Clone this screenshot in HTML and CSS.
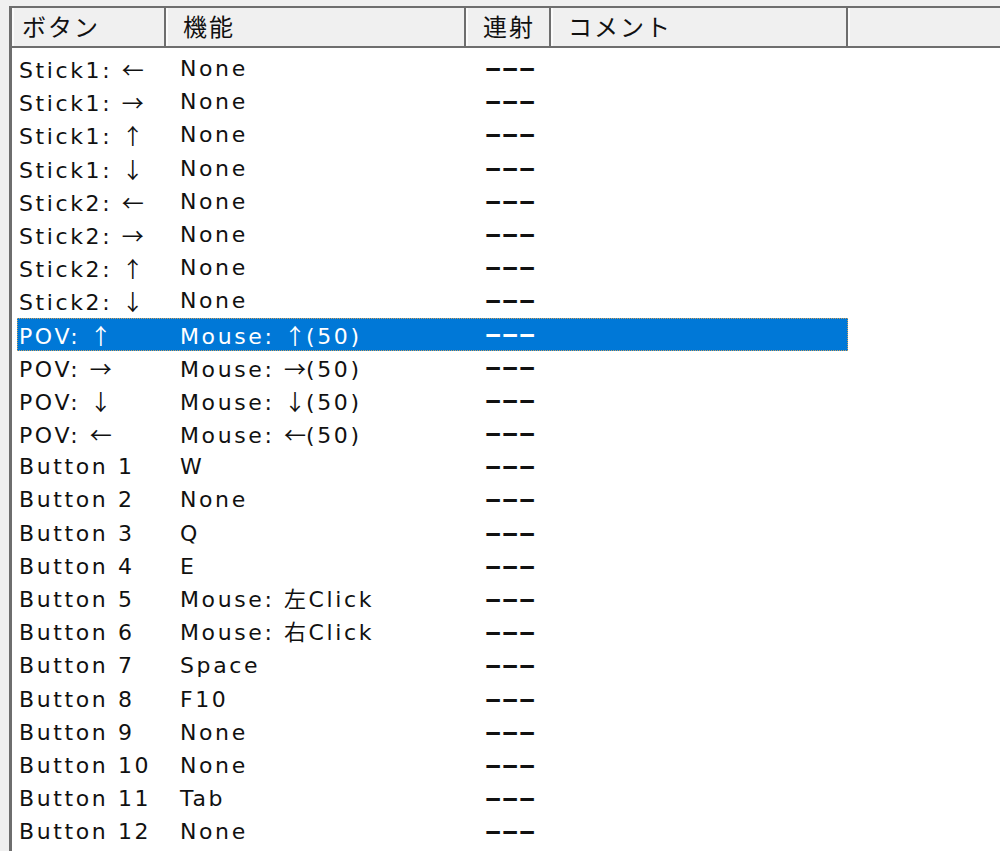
FILE: index.html
```html
<!DOCTYPE html>
<html lang="ja">
<head>
<meta charset="UTF-8">
<title>ボタン設定</title>
<link rel="stylesheet" href="styles.css">
</head>
<body>
<div class="listview">
    <!-- 見出し -->
    <div class="header">
        <div class="hcell c1">ボタン</div>
        <div class="hcell c2">機能</div>
        <div class="hcell c3">連射</div>
        <div class="hcell c4">コメント</div>
        <div class="hcell c5"></div>
    </div>
    <!-- 一覧 -->
    <div class="rows">
        <div class="row"><div class="c1">Stick1: <span class="arr">←</span></div><div class="c2">None</div><div class="c3"><span class="dash">---</span></div></div>
        <div class="row"><div class="c1">Stick1: <span class="arr">→</span></div><div class="c2">None</div><div class="c3"><span class="dash">---</span></div></div>
        <div class="row"><div class="c1">Stick1: <span class="arr">↑</span></div><div class="c2">None</div><div class="c3"><span class="dash">---</span></div></div>
        <div class="row"><div class="c1">Stick1: <span class="arr">↓</span></div><div class="c2">None</div><div class="c3"><span class="dash">---</span></div></div>
        <div class="row"><div class="c1">Stick2: <span class="arr">←</span></div><div class="c2">None</div><div class="c3"><span class="dash">---</span></div></div>
        <div class="row"><div class="c1">Stick2: <span class="arr">→</span></div><div class="c2">None</div><div class="c3"><span class="dash">---</span></div></div>
        <div class="row"><div class="c1">Stick2: <span class="arr">↑</span></div><div class="c2">None</div><div class="c3"><span class="dash">---</span></div></div>
        <div class="row"><div class="c1">Stick2: <span class="arr">↓</span></div><div class="c2">None</div><div class="c3"><span class="dash">---</span></div></div>
        <div class="row selected"><div class="c1">POV: <span class="arr">↑</span></div><div class="c2">Mouse: <span class="arr">↑</span>(50)</div><div class="c3"><span class="dash">---</span></div></div>
        <div class="row"><div class="c1">POV: <span class="arr">→</span></div><div class="c2">Mouse: <span class="arr">→</span>(50)</div><div class="c3"><span class="dash">---</span></div></div>
        <div class="row"><div class="c1">POV: <span class="arr">↓</span></div><div class="c2">Mouse: <span class="arr">↓</span>(50)</div><div class="c3"><span class="dash">---</span></div></div>
        <div class="row"><div class="c1">POV: <span class="arr">←</span></div><div class="c2">Mouse: <span class="arr">←</span>(50)</div><div class="c3"><span class="dash">---</span></div></div>
        <div class="row"><div class="c1">Button 1</div><div class="c2">W</div><div class="c3"><span class="dash">---</span></div></div>
        <div class="row"><div class="c1">Button 2</div><div class="c2">None</div><div class="c3"><span class="dash">---</span></div></div>
        <div class="row"><div class="c1">Button 3</div><div class="c2">Q</div><div class="c3"><span class="dash">---</span></div></div>
        <div class="row"><div class="c1">Button 4</div><div class="c2">E</div><div class="c3"><span class="dash">---</span></div></div>
        <div class="row"><div class="c1">Button 5</div><div class="c2">Mouse: 左Click</div><div class="c3"><span class="dash">---</span></div></div>
        <div class="row"><div class="c1">Button 6</div><div class="c2">Mouse: 右Click</div><div class="c3"><span class="dash">---</span></div></div>
        <div class="row"><div class="c1">Button 7</div><div class="c2">Space</div><div class="c3"><span class="dash">---</span></div></div>
        <div class="row"><div class="c1">Button 8</div><div class="c2">F10</div><div class="c3"><span class="dash">---</span></div></div>
        <div class="row"><div class="c1">Button 9</div><div class="c2">None</div><div class="c3"><span class="dash">---</span></div></div>
        <div class="row"><div class="c1">Button 10</div><div class="c2">None</div><div class="c3"><span class="dash">---</span></div></div>
        <div class="row"><div class="c1">Button 11</div><div class="c2">Tab</div><div class="c3"><span class="dash">---</span></div></div>
        <div class="row"><div class="c1">Button 12</div><div class="c2">None</div><div class="c3"><span class="dash">---</span></div></div>
    </div>
</div>
</body>
</html>
```

FILE: styles.css
```css
body {
    margin: 0;
    padding: 0;
    background-color: #f0f0f0;
    font-family: "DejaVu Sans", "Noto Sans CJK JP", sans-serif;
    overflow: hidden;
}
.listview {
    margin: 6px 0 0 9px;
    border-top: 2px solid #6e6e6e;
    border-left: 3px solid #6e6e6e;
    background-color: #ffffff;
    height: 900px;
}
.header {
    display: grid;
    grid-template-columns: 154px 300px 85px 297px 1fr;
    height: 38px;
    border-bottom: 2px solid #6e6e6e;
    background-color: #f0f0f0;
}
.hcell {
    font-family: "Noto Sans CJK JP", sans-serif;
    font-size: 24px;
    letter-spacing: 2px;
    line-height: 36px;
    color: #111;
    padding-left: 15px;
    border-left: 2px solid #fbfbfb;
    border-right: 2px solid #6e6e6e;
    white-space: nowrap;
    overflow: hidden;
}
.hcell.c1 {
    padding-left: 8px;
}
.hcell.c5 {
    border-right: none;
}
.rows {
    padding-top: 4px;
}
.row {
    display: grid;
    grid-template-columns: 149px 300px 85px 297px;
    height: 33.2px;
    line-height: 33.2px;
    margin-left: 5px;
    width: 831px;
    font-size: 22px;
    letter-spacing: 2.6px;
    color: #111;
    white-space: nowrap;
    box-sizing: border-box;
}
.row .c1 {
    padding-left: 2px;
}
.row .c2 {
    padding-left: 14px;
}
.row .c3 {
    padding-left: 18px;
}
.arr {
    font-family: "Noto Sans CJK JP", sans-serif;
    letter-spacing: 0;
}
.dash {
    display: inline-block;
    font-weight: bold;
    letter-spacing: -0.6px;
    transform: scaleX(2);
    transform-origin: left center;
}
.selected {
    background-color: #0078d7;
    color: #ffffff;
    outline: 1px dotted #c8a060;
    outline-offset: -1px;
}
```
